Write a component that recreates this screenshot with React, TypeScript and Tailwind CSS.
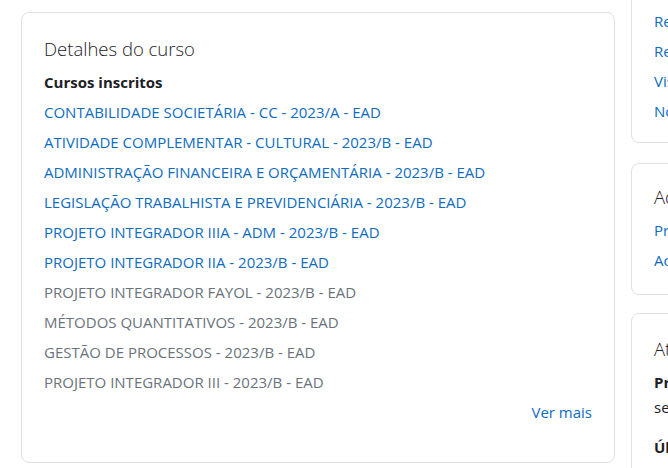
export default function App() {
  const active = [
    "CONTABILIDADE SOCIETÁRIA - CC - 2023/A - EAD",
    "ATIVIDADE COMPLEMENTAR - CULTURAL - 2023/B - EAD",
    "ADMINISTRAÇÃO FINANCEIRA E ORÇAMENTÁRIA - 2023/B - EAD",
    "LEGISLAÇÃO TRABALHISTA E PREVIDENCIÁRIA - 2023/B - EAD",
    "PROJETO INTEGRADOR IIIA - ADM - 2023/B - EAD",
    "PROJETO INTEGRADOR IIA - 2023/B - EAD",
  ];
  const hidden = [
    "PROJETO INTEGRADOR FAYOL - 2023/B - EAD",
    "MÉTODOS QUANTITATIVOS - 2023/B - EAD",
    "GESTÃO DE PROCESSOS - 2023/B - EAD",
    "PROJETO INTEGRADOR III - 2023/B - EAD",
  ];

  return (
    <div
      className="w-[668px] h-[468px] overflow-hidden bg-white flex items-start text-[#1d2125] text-[15px]"
      style={{ fontFamily: '"Open Sans", "Noto Sans", sans-serif' }}
    >
      <div className="ml-[21px] mt-[12px] w-[594px] h-[451px] shrink-0 border border-[#dee2e6] rounded-[8px] px-[22px] pt-[23px]">
        <h2 className="text-[18.5px] font-light leading-[26px] h-[26px] mb-[5px]">Detalhes do curso</h2>
        <div className="h-[30px] leading-[30px] font-bold">Cursos inscritos</div>
        {active.map((c) => (
          <div key={c} className="h-[30px] leading-[30px] text-[#0f6cbf] whitespace-nowrap">
            {c}
          </div>
        ))}
        {hidden.map((c) => (
          <div key={c} className="h-[30px] leading-[30px] text-[#6a737b] whitespace-nowrap">
            {c}
          </div>
        ))}
        <div className="h-[30px] leading-[30px] text-right text-[#0f6cbf]">Ver mais</div>
      </div>

      <div className="ml-[16px] w-[300px] shrink-0 flex flex-col -mt-[40px] whitespace-nowrap">
        <div className="shrink-0 border border-[#dee2e6] rounded-[8px] px-[22px] pt-[45px] h-[183px]">
          {["Relatório de navegação", "Resumo de navegação", "Visão geral das notas", "Notas"].map((l) => (
            <div key={l} className="h-[30px] leading-[30px] text-[#0f6cbf]">
              {l}
            </div>
          ))}
        </div>
        <div className="shrink-0 mt-[20px] border border-[#dee2e6] rounded-[8px] px-[22px] pt-[20px] h-[132px]">
          <h3 className="text-[18.5px] font-light leading-[26px] h-[26px] mb-[5px]">Administração</h3>
          <div className="h-[30px] leading-[30px] text-[#0f6cbf]">Preferências</div>
          <div className="h-[30px] leading-[30px] text-[#0f6cbf]">Acessar como</div>
        </div>
        <div className="shrink-0 mt-[18px] border border-[#dee2e6] rounded-[8px] px-[22px] pt-[22px] h-[200px]">
          <h3 className="text-[18.5px] font-light leading-[26px] h-[26px] mb-[8px]">Atividade de acesso</h3>
          <div className="font-bold leading-[25px] h-[25px]">Primeiro acesso ao site</div>
          <div className="leading-[25px] h-[25px]">segunda-feira, 6 fev 2023</div>
          <div className="font-bold leading-[25px] h-[25px] mt-[15px]">Último acesso ao site</div>
        </div>
      </div>
    </div>
  );
}
